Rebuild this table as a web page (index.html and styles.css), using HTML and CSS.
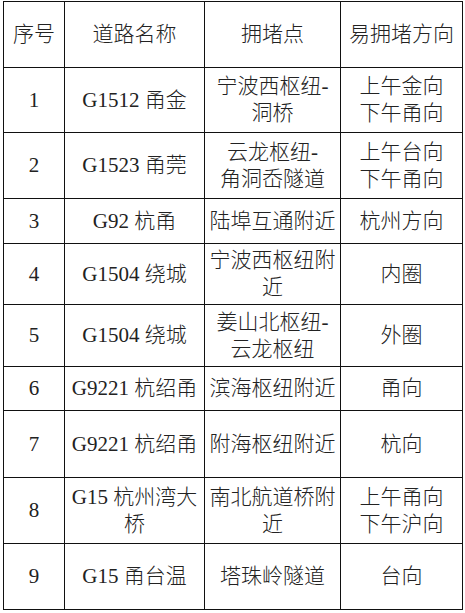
FILE: index.html
```html
<!DOCTYPE html>
<html lang="zh-CN">
<head>
<meta charset="utf-8">
<title>易拥堵路段</title>
<link rel="stylesheet" href="styles.css">
</head>
<body>
<div class="table">
  <div class="cell">序号</div><div class="cell">道路名称</div><div class="cell">拥堵点</div><div class="cell">易拥堵方向</div>
  <div class="cell">1</div><div class="cell">G1512 甬金</div><div class="cell">宁波西枢纽-<br>洞桥</div><div class="cell">上午金向<br>下午甬向</div>
  <div class="cell">2</div><div class="cell">G1523 甬莞</div><div class="cell">云龙枢纽-<br>角洞岙隧道</div><div class="cell">上午台向<br>下午甬向</div>
  <div class="cell">3</div><div class="cell">G92 杭甬</div><div class="cell">陆埠互通附近</div><div class="cell">杭州方向</div>
  <div class="cell">4</div><div class="cell">G1504 绕城</div><div class="cell">宁波西枢纽附<br>近</div><div class="cell">内圈</div>
  <div class="cell">5</div><div class="cell">G1504 绕城</div><div class="cell">姜山北枢纽-<br>云龙枢纽</div><div class="cell">外圈</div>
  <div class="cell">6</div><div class="cell">G9221 杭绍甬</div><div class="cell">滨海枢纽附近</div><div class="cell">甬向</div>
  <div class="cell">7</div><div class="cell">G9221 杭绍甬</div><div class="cell">附海枢纽附近</div><div class="cell">杭向</div>
  <div class="cell">8</div><div class="cell">G15 杭州湾大<br>桥</div><div class="cell">南北航道桥附<br>近</div><div class="cell">上午甬向<br>下午沪向</div>
  <div class="cell">9</div><div class="cell">G15 甬台温</div><div class="cell">塔珠岭隧道</div><div class="cell">台向</div>
</div>
</body>
</html>
```
FILE: styles.css
```css
html, body {
  margin: 0;
  background: #ffffff;
}

body {
  padding: 1px 0 0 3px;
  font-family: "Liberation Serif", "Noto Sans CJK SC", serif;
  font-size: 21px;
  font-weight: 300;
  line-height: 27px;
  color: #222222;
}

.table {
  display: grid;
  width: 460px;
  box-sizing: border-box;
  grid-template-columns: 60px 139px 135px 121px;
  grid-template-rows: 65px 64px 65px 44px 60px 61px 43px 66px 65px 65px;
  gap: 1px;
  padding: 1px;
  background: #111111;
}

.cell {
  display: flex;
  align-items: center;
  justify-content: center;
  text-align: center;
  background: #ffffff;
  white-space: nowrap;
}
```
